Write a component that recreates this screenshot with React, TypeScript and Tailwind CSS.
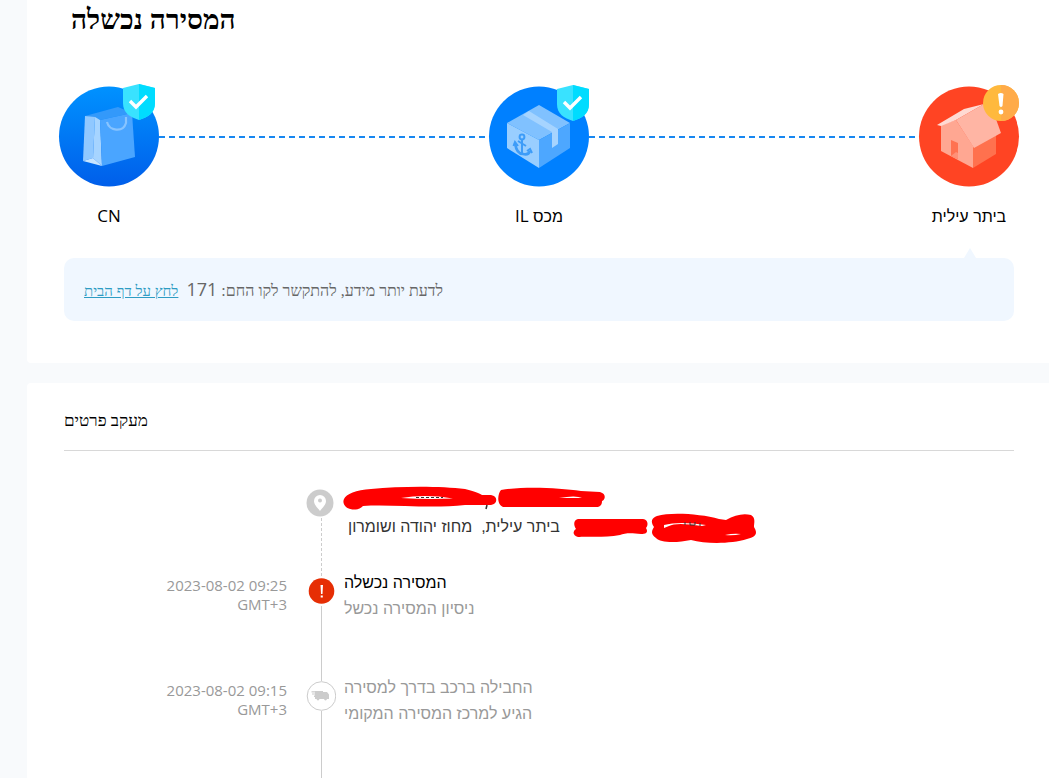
import type { ReactNode } from 'react';

function CheckShield() {
  return (
    <g>
      <path d="M80 -2 L96 2 V17 C96 27 89 31 80 34 C71 31 64 27 64 17 V2 Z" fill="#39e2ff" />
      <path d="M80 -2 L96 2 V17 C96 27 89 31 80 34 Z" fill="#00dcff" />
      <path d="M71 15 L77 21 L88 10" fill="none" stroke="#fff" strokeWidth="3.4" />
    </g>
  );
}

function BagIcon() {
  return (
    <svg viewBox="0 0 100 101" className="block h-[101px] w-full overflow-visible" aria-hidden="true">
      <defs>
        <linearGradient id="bagBg" x1="0" y1="0" x2="0" y2="1">
          <stop offset="0" stopColor="#0092ff" />
          <stop offset="1" stopColor="#005eea" />
        </linearGradient>
      </defs>
      <circle cx="50" cy="50.5" r="50" fill="url(#bagBg)" />
      <path d="M26 30 L59 21 L73 27 L41 34 Z" fill="#3399fa" />
      <path d="M26 30 L36 31 L34 72 L24 75 Z" fill="#90c8ff" />
      <path d="M36 31 L41 34 L43 80 L34 72 Z" fill="#a6d4ff" />
      <path d="M24 75 L34 72 L43 80 Z" fill="#c8e5ff" />
      <path d="M41 34 L73 27 L76 71 L43 80 Z" fill="#4aa5ff" />
      <path d="M48 36 C50 45 64 47 67 37 V31" fill="none" stroke="#88c4ff" strokeWidth="2.2" />
      <CheckShield />
    </svg>
  );
}

function BoxIcon() {
  return (
    <svg viewBox="0 0 100 101" className="block h-[101px] w-full overflow-visible" aria-hidden="true">
      <circle cx="50" cy="50.5" r="50" fill="#0080ff" />
      <path d="M50 19 L81 37 L50 54 L18 37 Z" fill="#80c1ff" />
      <path d="M18 37 L50 54 V82 L18 62 Z" fill="#99ceff" />
      <path d="M81 37 L50 54 V82 L81 62 Z" fill="#4da7ff" />
      <path d="M40 25 L34 29 L63 46 V62 L69 58 V43 Z" fill="#a6d4ff" />
      <g fill="none" stroke="#3d9cf8" strokeWidth="2">
        <circle cx="33" cy="51" r="2.4" />
        <path d="M33 54 V68 M29 55 L37 60" />
        <path d="M26 57 C27 64 30 68 34 68 C38 69 40 68 41 65" strokeWidth="2.6" />
        <path d="M24.500 60 L26 56 L29 60 M38 65 L41 63 L43 67" />
      </g>
      <g transform="translate(4 1)">
        <CheckShield />
      </g>
    </svg>
  );
}

function HouseIcon() {
  return (
    <svg viewBox="0 0 100 101" className="block h-[101px] w-full overflow-visible" aria-hidden="true">
      <circle cx="50" cy="50.5" r="50" fill="#ff4423" />
      <path d="M22 39 L37 34 L54 60 V82 L22 65 Z" fill="#ffa792" />
      <path d="M54 60 L77 46 V68 L54 82 Z" fill="#ff714e" />
      <path d="M18 39 L45 23 L65 18 L37 34 L22 40 Z" fill="#ffdad3" />
      <path d="M37 34 L65 18 L73 22 L82 47 L55 62 Z" fill="#ffb5a4" />
      <path d="M32 54 L39 57 V73 L32 70 Z" fill="#ff7251" />
      <path d="M32 70 L37 66 L39 67 V73 Z" fill="#ff9177" />
      <circle cx="82" cy="17" r="18" fill="#ffb93d" />
      <path d="M82 -1 A18 18 0 0 1 82 35 Z" fill="#ffab49" />
      <path d="M79 8 Q82 6 84.500 8 L83.500 20 Q82 22 80.500 20 Z" fill="#fff" />
      <circle cx="82" cy="26" r="2.400" fill="#fff" />
    </svg>
  );
}

function PinIcon() {
  return (
    <svg viewBox="0 0 30 30" className="block size-[30px]" aria-hidden="true">
      <circle cx="14" cy="15" r="13.500" fill="#ccc" />
      <path d="M14 7 A6 6 0 0 1 20 13 C20 17 16 20 14 23 C12 20 8 17 8 13 A6 6 0 0 1 14 7 Z" fill="#fff" />
      <circle cx="14" cy="12.500" r="2" fill="#ccc" />
    </svg>
  );
}

function AlertIcon() {
  return (
    <svg viewBox="0 0 30 30" className="block size-[30px]" aria-hidden="true">
      <circle cx="15.500" cy="15" r="12.800" fill="#e62e04" />
      <path d="M14.500 9 H17 L16.500 18 H15 Z M14.700 19.500 H16.800 V21.600 H14.700 Z" fill="#fff" />
    </svg>
  );
}

function TruckIcon() {
  return (
    <svg viewBox="0 0 30 30" className="block size-[30px]" aria-hidden="true">
      <circle cx="15.500" cy="15" r="14.300" fill="#fff" stroke="#ccc" />
      <g fill="#ccc">
        <path d="M9 10 H17 V11 H21 L23 13.500 V18 H9 V16 H8 V14.600 H9 V13.600 H6 V12.600 H9 Z" />
        <path d="M5.500 10.200 H9 V11.500 H5.500 Z" />
        <circle cx="12" cy="18" r="1.400" />
        <circle cx="19.500" cy="18" r="1.400" />
      </g>
    </svg>
  );
}

// Marker strokes that hide the private parts of the address
function Redaction() {
  return (
    <svg viewBox="3 3 420 62" className="pointer-events-none absolute left-0 top-0 h-[62px] w-[420px] overflow-visible" aria-hidden="true">
      <g fill="#f00">
        <path d="M3 14 C5 9 15 5 30 4 C60 1 100 1 124 4 C132 6 138 8 141 10 H150 C157 11 157 19 150 20 H124 C90 24 50 19 22 21 C18 26 8 25 5 22 C2 19 2 16 3 14 Z" />
        <path d="M160 5 C185 1 218 3 240 6 L259 7 C266 9 264 15 261 16 C261 20 259 22 255 22 C225 22 190 22 162 22 C155 19 157 8 160 5 Z" />
        <path d="M237 34 H302 C308 35 307 41 305 43 C308 48 304 49 300 49 C290 48 284 48 279 50 C262 53 245 51 237 52 C231 50 232 46 235 44 C232 39 233 35 237 34 Z" />
        <path d="M316 31 C330 27 360 29 378 34 L385 35 C394 30 402 28 410 30 C415 33 413 38 413 42 C418 50 413 52 406 54 C390 59 365 59 350 55 C336 58 319 58 315 53 C309 49 311 45 313 42 C309 36 311 33 316 31 Z" />
      </g>
      <g fill="#fff">
        <path d="M60 13 Q85 9 112 13.500 Q85 14.500 60 13 Z" />
        <path d="M218 13 Q235 10 241 13 Z" />
        <path d="M323 43 V40 Q338 36 365 40 L361 41 Q335 37 328 41 Z" />
        <path d="M384 50 Q393 48 400 49 Q392 51 384 50 Z" />
      </g>
      <g fill="none" stroke="#333">
        <path d="M75 12.500 H102" strokeDasharray="3 2" />
        <path d="M344 37 V40 M349 37 V40 H354 V37 M359 38 V41" />
        <path d="M146 20 L145 24" strokeWidth="1.500" />
      </g>
    </svg>
  );
}

const steps = [
  { code: 'CN', name: '', icon: <BagIcon /> },
  { code: 'IL', name: 'מכס', icon: <BoxIcon /> },
  { code: '', name: 'ביתר עילית', icon: <HouseIcon /> },
];

function Connector() {
  return (
    <div className="mt-[50px] h-[2px] flex-1 bg-[repeating-linear-gradient(90deg,#1787f0_0_6px,transparent_6px_10px)]" />
  );
}

type EventRowProps = {
  date?: string;
  zone?: string;
  icon: ReactNode;
  line: string;
  className: string;
  children: ReactNode;
};

function EventRow({ date, zone, icon, line, className, children }: EventRowProps) {
  return (
    <li className={`flex ${className}`}>
      <div className="w-[223px] text-right font-['Open_Sans',sans-serif] text-[15px] leading-[19px] text-[#999]">
        <div>{date}</div>
        <div>{zone}</div>
      </div>
      <div className="ml-[19px] flex w-[30px] flex-col items-center">
        {icon}
        <div className={`flex-1 border-l ${line}`} />
      </div>
      <div className="ml-2 flex-1">{children}</div>
    </li>
  );
}

export default function App() {
  return (
    <div className="flex min-h-screen flex-col gap-5 bg-[#f8fafc] pl-[27px] font-['Liberation_Sans',sans-serif] text-black">
      {/* Delivery status */}
      <section className="rounded-bl bg-white pb-[42px] pl-8 pr-[30px]">
        <h1 className="pl-3 pt-1 font-['Liberation_Serif',serif] text-[28px] font-bold leading-8">המסירה נכשלה</h1>

        <ol className="mt-[50px] flex">
          {steps.map((step, i) => (
            <li key={step.code + step.name} className={i > 0 ? 'flex flex-1' : 'flex'}>
              {i > 0 && <Connector />}
              <div className="w-[100px] text-center">
                {step.icon}
                <div className="mt-[17px] h-6 font-['Open_Sans',sans-serif] text-[17px] leading-6">
                  {step.code} {step.name && <span className="font-['Liberation_Sans',sans-serif] text-base leading-6">{step.name}</span>}
                </div>
              </div>
            </li>
          ))}
        </ol>

        <div className="relative mx-[5px] mt-[30px] rounded-[10px] bg-[#f0f7ff] p-5">
          <span className="absolute -top-2.5 right-[38px] h-2.5 w-3 bg-[#f0f7ff] [clip-path:polygon(50%_0,100%_100%,0_100%)]" />
          <p className="h-[23px] font-['Liberation_Serif',serif] text-base leading-[25px] text-[#666]">
            לדעת יותר מידע, להתקשר לקו החם: <span className="font-['Open_Sans',sans-serif] text-lg leading-none">171</span>&nbsp;{' '}
            <a href="#home" className="text-[15px] text-[#2e9cc3] underline">לחץ על דף הבית</a>
          </p>
        </div>
      </section>

      {/* Tracking details */}
      <section className="flex flex-1 flex-col rounded-tl bg-white pl-[37px] pr-[35px] pt-6">
        <h2 className="border-b border-[#d8d8d8] pb-[15px] font-['Liberation_Serif',serif] text-[17px] leading-7">מעקב פרטים</h2>

        <ol className="mt-[37px] flex flex-1 flex-col">
          <EventRow icon={<PinIcon />} line="border-dashed border-[#ccc]" className="min-h-[88px]">
            <div className="relative pl-1 pt-[27px] text-base leading-6 text-[#333]">
              ביתר עילית,&nbsp; מחוז יהודה ושומרון
              <Redaction />
            </div>
          </EventRow>

          <EventRow date="2023-08-02 09:25" zone="GMT+3" icon={<AlertIcon />} line="border-[#ccc]" className="min-h-[105px]">
            <div className="text-base leading-[26px] text-[#999]">
              <div className="-mt-1.5 text-black">המסירה נכשלה</div>
              <div>ניסיון המסירה נכשל</div>
            </div>
          </EventRow>

          <EventRow date="2023-08-02 09:15" zone="GMT+3" icon={<TruckIcon />} line="border-[#ccc]" className="flex-1">
            <div className="text-base leading-[26px] text-[#999]">
              <div className="-mt-1.5">החבילה ברכב בדרך למסירה</div>
              <div>הגיע למרכז המסירה המקומי</div>
            </div>
          </EventRow>
        </ol>
      </section>
    </div>
  );
}
